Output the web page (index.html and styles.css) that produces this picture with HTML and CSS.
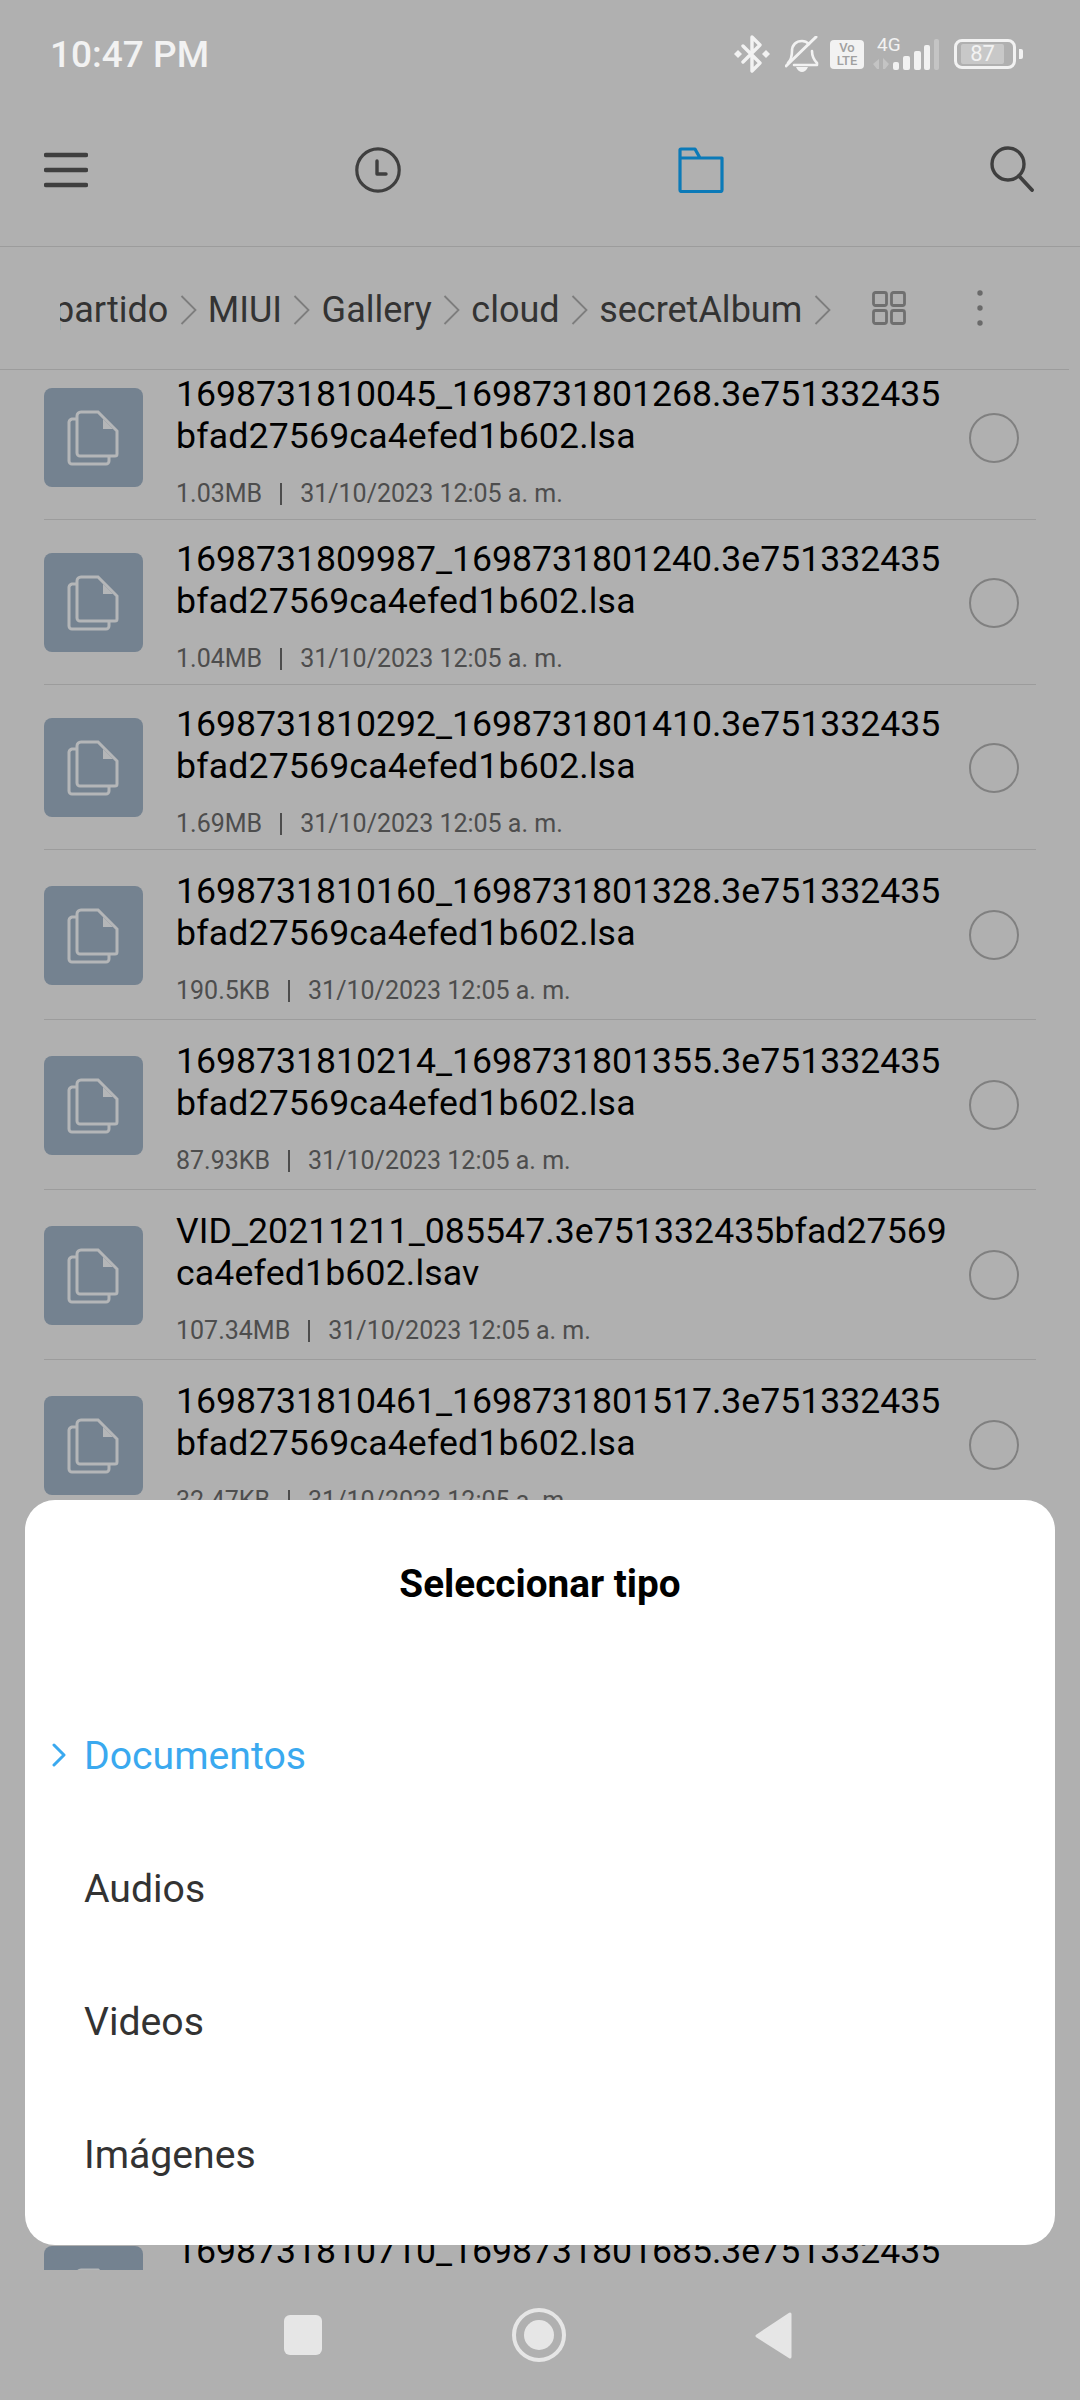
FILE: index.html
```html
<!DOCTYPE html>
<html lang="es">
<head>
<meta charset="utf-8">
<title>Seleccionar tipo</title>
<link rel="stylesheet" href="styles.css">
</head>
<body>
<div class="screen">
  <header class="status">
    <span class="time">10:47 PM</span>
    <div class="status-icons">
      <svg class="ic-bt" viewBox="0 0 36 38" width="36" height="38"><path d="M9 11l17 17-8 8V2l8 8L9 27" fill="none" stroke="#f2f2f2" stroke-width="3.4" stroke-linejoin="round" stroke-linecap="round"/><path d="M0 19l4-4 4 4-4 4zM28 19l4-4 4 4-4 4z" fill="#f2f2f2"/></svg>
      <svg class="ic-bell" viewBox="0 0 34 36" width="34" height="36"><path d="M3 27c3-3 4-7 4-12 0-6 4-10 10-10 3 0 5 1 7 3M27 15c0 4 1 8 5 12v2H9" fill="none" stroke="#f2f2f2" stroke-width="2.6" stroke-linejoin="round" stroke-linecap="round"/><path d="M1 30L31 1" stroke="#f2f2f2" stroke-width="3" stroke-linecap="round"/><path d="M11 31h12c-1 3-4 5-6 5s-5-2-6-5z" fill="#f2f2f2"/></svg>
      <span class="volte"><span>Vo</span><span>LTE</span></span>
      <div class="signal">
        <span class="net">4G</span>
        <svg viewBox="0 0 66 32" width="66" height="32"><path d="M0 26l6-5v10H4zM10 20v11h2l4-5z" fill="#c4c4c4"/><g fill="#f2f2f2"><rect x="20" y="24" width="6" height="8" rx="2"/><rect x="30" y="18" width="7" height="14" rx="2"/><rect x="41" y="13" width="7" height="19" rx="2"/><rect x="51" y="7" width="6" height="25" rx="2"/></g><rect x="61" y="1" width="5" height="31" rx="2" fill="#c4c4c4"/></svg>
      </div>
      <div class="battery"><div class="battery-body"><span class="battery-fill">87</span></div><span class="battery-cap"></span></div>
    </div>
  </header>

  <nav class="toolbar">
    <svg class="tb-menu" viewBox="0 0 44 36" width="44" height="36"><path d="M2 3h40M2 18h40M2 33h40" stroke="#3f3f3f" stroke-width="4.4" stroke-linecap="round"/></svg>
    <svg class="tb-clock" viewBox="0 0 46 46" width="46" height="46"><circle cx="23" cy="23" r="21.2" fill="none" stroke="#3f3f3f" stroke-width="3.2"/><path d="M22 14v13h9" fill="none" stroke="#3f3f3f" stroke-width="3.4" stroke-linecap="round" stroke-linejoin="round"/></svg>
    <svg class="tb-folder" viewBox="0 0 46 46" width="46" height="46"><path d="M2 43V3a1 1 0 0 1 1-1h14l5 9h22v32a1.500 1.500 0 0 1-1.500 1.500H3.500A1.500 1.500 0 0 1 2 43z M2 11h20" fill="none" stroke="#0b7ab8" stroke-width="3.2" stroke-linejoin="round"/></svg>
    <svg class="tb-search" viewBox="0 0 44 46" width="44" height="46"><circle cx="18" cy="18" r="16" fill="none" stroke="#3f3f3f" stroke-width="3.4"/><path d="M29 30l13 14" stroke="#3f3f3f" stroke-width="3.8" stroke-linecap="round"/></svg>
  </nav>

  <div class="crumbbar">
    <div class="crumbs">
      <span class="crumb crumb-first">partido</span><svg class="sep" viewBox="0 0 17 30" width="17" height="30"><path d="M1.500 1l14 14-14 14" fill="none" stroke="#7d7d7d" stroke-width="1.800"/></svg>
      <span class="crumb">MIUI</span><svg class="sep" viewBox="0 0 17 30" width="17" height="30"><path d="M1.500 1l14 14-14 14" fill="none" stroke="#7d7d7d" stroke-width="1.800"/></svg>
      <span class="crumb">Gallery</span><svg class="sep" viewBox="0 0 17 30" width="17" height="30"><path d="M1.500 1l14 14-14 14" fill="none" stroke="#7d7d7d" stroke-width="1.800"/></svg>
      <span class="crumb">cloud</span><svg class="sep" viewBox="0 0 17 30" width="17" height="30"><path d="M1.500 1l14 14-14 14" fill="none" stroke="#7d7d7d" stroke-width="1.800"/></svg>
      <span class="crumb">secretAlbum</span><svg class="sep" viewBox="0 0 17 30" width="17" height="30"><path d="M1.500 1l14 14-14 14" fill="none" stroke="#7d7d7d" stroke-width="1.800"/></svg>
    </div>
    <svg class="grid-ic" viewBox="0 0 34 34" width="34" height="34"><g fill="none" stroke="#6f6f6f" stroke-width="2.800"><rect x="1.500" y="1.500" width="13" height="13" rx="2"/><rect x="19.500" y="1.500" width="13" height="13" rx="2"/><rect x="1.500" y="19.500" width="13" height="13" rx="2"/><rect x="19.500" y="19.500" width="13" height="13" rx="2"/></g></svg>
    <svg class="more-ic" viewBox="0 0 6 36" width="6" height="36"><circle cx="3" cy="3" r="2.700" fill="#6a6a6a"/><circle cx="3" cy="18" r="2.700" fill="#6a6a6a"/><circle cx="3" cy="33" r="2.700" fill="#6a6a6a"/></svg>
  </div>

  <main class="listport">
    <ul class="list">
      <li class="row row-s">
        <div class="thumb"><svg class="doc" viewBox="0 0 52 56" width="52" height="56"><use href="#doc-icon"/></svg></div>
        <div class="body"><p class="name">1698731810045_1698731801268.3e751332435<br><span class="tail">bfad27569ca4efed1b602.lsa</span></p><p class="meta"><span>1.03MB</span><i></i><span>31/10/2023 12:05 a. m.</span></p></div>
        <span class="radio"></span>
      </li>
      <li class="row row-s">
        <div class="thumb"><svg class="doc" viewBox="0 0 52 56" width="52" height="56"><use href="#doc-icon"/></svg></div>
        <div class="body"><p class="name">1698731809987_1698731801240.3e751332435<br><span class="tail">bfad27569ca4efed1b602.lsa</span></p><p class="meta"><span>1.04MB</span><i></i><span>31/10/2023 12:05 a. m.</span></p></div>
        <span class="radio"></span>
      </li>
      <li class="row row-s">
        <div class="thumb"><svg class="doc" viewBox="0 0 52 56" width="52" height="56"><use href="#doc-icon"/></svg></div>
        <div class="body"><p class="name">1698731810292_1698731801410.3e751332435<br><span class="tail">bfad27569ca4efed1b602.lsa</span></p><p class="meta"><span>1.69MB</span><i></i><span>31/10/2023 12:05 a. m.</span></p></div>
        <span class="radio"></span>
      </li>
      <li class="row">
        <div class="thumb"><svg class="doc" viewBox="0 0 52 56" width="52" height="56"><use href="#doc-icon"/></svg></div>
        <div class="body"><p class="name">1698731810160_1698731801328.3e751332435<br><span class="tail">bfad27569ca4efed1b602.lsa</span></p><p class="meta"><span>190.5KB</span><i></i><span>31/10/2023 12:05 a. m.</span></p></div>
        <span class="radio"></span>
      </li>
      <li class="row">
        <div class="thumb"><svg class="doc" viewBox="0 0 52 56" width="52" height="56"><use href="#doc-icon"/></svg></div>
        <div class="body"><p class="name">1698731810214_1698731801355.3e751332435<br><span class="tail">bfad27569ca4efed1b602.lsa</span></p><p class="meta"><span>87.93KB</span><i></i><span>31/10/2023 12:05 a. m.</span></p></div>
        <span class="radio"></span>
      </li>
      <li class="row">
        <div class="thumb"><svg class="doc" viewBox="0 0 52 56" width="52" height="56"><use href="#doc-icon"/></svg></div>
        <div class="body"><p class="name name-vid">VID_20211211_085547.3e751332435bfad27569<br><span class="tail">ca4efed1b602.lsav</span></p><p class="meta"><span>107.34MB</span><i></i><span>31/10/2023 12:05 a. m.</span></p></div>
        <span class="radio"></span>
      </li>
      <li class="row">
        <div class="thumb"><svg class="doc" viewBox="0 0 52 56" width="52" height="56"><use href="#doc-icon"/></svg></div>
        <div class="body"><p class="name">1698731810461_1698731801517.3e751332435<br><span class="tail">bfad27569ca4efed1b602.lsa</span></p><p class="meta"><span>32.47KB</span><i></i><span>31/10/2023 12:05 a. m.</span></p></div>
        <span class="radio"></span>
      </li>
      <li class="row row-last">
        <div class="thumb"><svg class="doc" viewBox="0 0 52 56" width="52" height="56"><use href="#doc-icon"/></svg></div>
        <div class="body"><p class="name">1698731810710_1698731801685.3e751332435</p></div>
      </li>
    </ul>
  </main>

  <footer class="navbar">
    <span class="nav-square"></span>
    <span class="nav-home"><span></span></span>
    <svg class="nav-back" viewBox="0 0 37 47" width="37" height="47"><path d="M35 2v43L2 24z" fill="#e6e6e6" stroke="#e6e6e6" stroke-width="3" stroke-linejoin="round"/></svg>
  </footer>

  <section class="sheet">
    <h2 class="sheet-title">Seleccionar tipo</h2>
    <ul class="options">
      <li class="option option-active"><svg class="chev" viewBox="0 0 15 24" width="15" height="24"><path d="M2 2l10 10L2 22" fill="none" stroke="#3aa9ef" stroke-width="3" stroke-linecap="round" stroke-linejoin="round"/></svg>Documentos</li>
      <li class="option">Audios</li>
      <li class="option">Videos</li>
      <li class="option">Imágenes</li>
    </ul>
  </section>
</div>
<svg class="defs" width="0" height="0" aria-hidden="true"><defs><g id="doc-icon"><path d="M10 9H5a4 4 0 0 0-3 3v39a3 3 0 0 0 3 3h34a3 3 0 0 0 3-3v-4" fill="none" stroke="#b4b6b8" stroke-width="3"/><path d="M14 2h17l19 19v23a2 2 0 0 1-2 2H13a3 3 0 0 1-3-3V6a4 4 0 0 1 4-4z" fill="none" stroke="#b4b6b8" stroke-width="3"/><path d="M36 9l10 10h-10z" fill="#b4b6b8"/></g></defs></svg>
</body>
</html>
```
FILE: styles.css
```css
* { box-sizing: border-box; }
html, body { margin: 0; padding: 0; }
body { background: #b0b0b0; font-family: Roboto, "Liberation Sans", sans-serif; }
p, ul, h2 { margin: 0; padding: 0; }
ul { list-style: none; }
.defs { position: absolute; }

.screen { position: relative; width: 1080px; height: 2400px; overflow: hidden; background: #b0b0b0; display: flex; flex-direction: column; }

.status { height: 100px; display: flex; align-items: center; justify-content: space-between; padding: 8px 57px 0 50px; flex: none; }
.time { color: #f2f2f2; font-size: 37px; font-weight: 500; margin-top: 1px; }
.status-icons { display: flex; align-items: center; }
.ic-bt { margin-right: 15px; }
.ic-bell { margin-right: 11px; }
.volte { width: 34px; height: 29px; background: #f2f2f2; border-radius: 4px; display: flex; flex-direction: column; align-items: center; justify-content: center; color: #a0a0a0; font-size: 13px; line-height: 13px; font-weight: 500; margin-right: 9px; }
.signal { position: relative; width: 66px; height: 32px; margin-right: 15px; }
.signal svg { display: block; }
.net { position: absolute; left: 4px; top: -3px; color: #f2f2f2; font-size: 19px; line-height: 20px; }
.battery { display: flex; align-items: center; gap: 3px; }
.battery-body { width: 62px; height: 30px; border: 3px solid #f2f2f2; border-radius: 8px; padding: 2px 6px 2px 4px; display: flex; }
.battery-fill { width: 43px; height: 20px; background: #c8c8c8; border-radius: 2px; color: #f2f2f2; font-size: 22px; line-height: 20px; text-align: center; }
.battery-cap { width: 4px; height: 10px; background: #f2f2f2; border-radius: 0 2px 2px 0; }

.toolbar { height: 147px; flex: none; display: flex; align-items: center; border-bottom: 1px solid #9c9c9c; padding: 0 0 6px 44px; }
.tb-clock { margin-left: 267px; }
.tb-folder { margin-left: 277px; }
.tb-search { margin-left: 266px; margin-top: -2px; }

.crumbbar { height: 123px; flex: none; width: 1069px; border-bottom: 1px solid #9c9c9c; display: flex; align-items: center; }
.crumbs { margin-left: 60px; width: 785px; flex: none; overflow: hidden; display: flex; align-items: center; gap: 11.25px; padding-top: 4px; }
.crumb { color: #333; font-size: 36px; line-height: 44px; white-space: nowrap; flex: none; }
.crumb-first { margin-left: -6px; }
.sep { flex: none; }
.grid-ic { margin-left: 27px; flex: none; }
.more-ic { margin-left: 71px; flex: none; }

.listport { height: 1900px; flex: none; overflow: hidden; }
.list { margin-top: -15px; }
.row { height: 170px; margin: 0 44px; width: 992px; display: flex; align-items: flex-start; border-bottom: 1px solid #9c9c9c; position: relative; }
.row-s { height: 165px; }
.thumb { width: 99px; height: 99px; flex: none; margin-top: 36px; background: #748290; border-radius: 8px; display: flex; align-items: center; justify-content: center; }
.row-s .thumb { margin-top: 33px; }
.doc { margin-left: -2px; }
.body { margin-left: 33px; padding-top: 20px; flex: 1; min-width: 0; }
.row-s .body { padding-top: 18px; }
.name { color: #000; font-size: 35.6px; line-height: 42px; white-space: nowrap; }
.name-vid { letter-spacing: 0.08px; }
.tail { letter-spacing: 0.18px; }
.meta { color: #4d4d4d; font-size: 25px; line-height: 28px; margin-top: 23px; display: flex; align-items: center; }
.meta i { width: 2px; height: 22px; background: #4d4d4d; margin: 0 18px; }
.radio { position: absolute; right: 17px; top: 60px; width: 50px; height: 50px; border: 2px solid #808080; border-radius: 50%; }
.row-s .radio { top: 58px; }
.row-last { margin-top: 680px; border: 0; }

.navbar { height: 130px; flex: none; display: flex; align-items: center; padding-left: 284px; }
.nav-square { width: 38px; height: 40px; background: #e6e6e6; border-radius: 6px; }
.nav-home { width: 54px; height: 54px; border: 4px solid #e6e6e6; border-radius: 50%; margin-left: 190px; display: flex; align-items: center; justify-content: center; }
.nav-home span { width: 30px; height: 30px; border-radius: 50%; background: #e6e6e6; }
.nav-back { margin-left: 189px; }

.sheet { position: absolute; left: 25px; top: 1500px; width: 1030px; height: 745px; background: #fff; border-radius: 30px; }
.sheet-title { text-align: center; font-size: 38.7px; font-weight: 700; color: #000; line-height: 44px; padding-top: 62px; }
.options { margin-top: 83px; }
.option { position: relative; height: 133px; padding-left: 59px; display: flex; align-items: center; font-size: 39.2px; color: #333; }
.option-active { color: #3aa9ef; }
.chev { position: absolute; left: 27px; top: 50%; margin-top: -13px; }
```
